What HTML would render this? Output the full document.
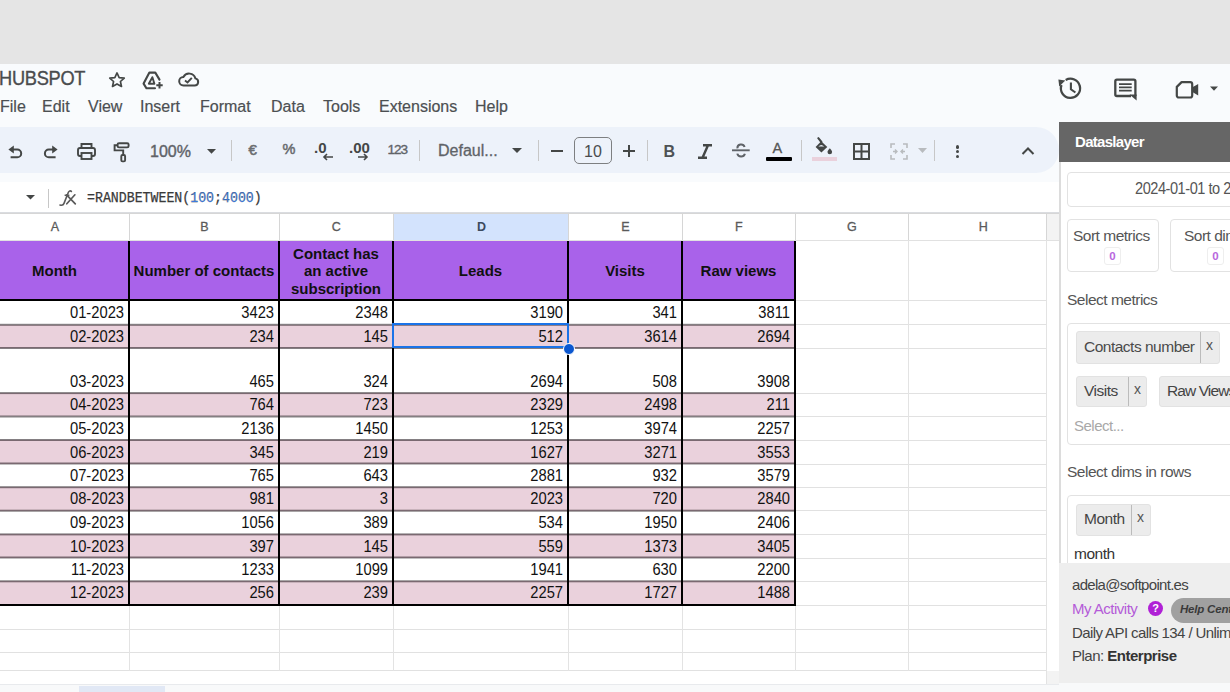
<!DOCTYPE html>
<html><head><meta charset="utf-8">
<style>
*{box-sizing:border-box;margin:0;padding:0}
html,body{width:1230px;height:692px;overflow:hidden;background:#f9fbfd;font-family:"Liberation Sans",sans-serif;position:relative}
.a{position:absolute;white-space:nowrap}
#topgray{left:0;top:0;width:1230px;height:64px;background:#e5e5e5}
.menu{top:97.7px;font-size:16px;color:#4c4f52;line-height:18px;-webkit-text-stroke:0.2px #4c4f52}
.icon{position:absolute}
#tb{left:-30px;top:127px;width:1089px;height:46px;background:#edf2fa;border-radius:23px}
.sep{position:absolute;width:1px;background:#c7c7c7}
#fbar{left:0;top:182px;width:1059px;height:31px;background:#fff;border-bottom:1px solid #dadce0}
#grid{left:0;top:213px;width:1059px;height:479px;background:#fff;overflow:hidden}
.ch{position:absolute;top:0;height:27px;font-size:12.5px;color:#444;text-align:center;line-height:27px;border-right:1px solid #e1e1e1;border-top:1px solid #e1e1e1;border-bottom:1px solid #e1e1e1}
.cell{position:absolute;font-size:15px;color:#000;text-align:right;padding-right:5px;line-height:17px}
.hd{position:absolute;font-size:15px;font-weight:bold;color:#111;text-align:center;display:flex;align-items:center;justify-content:center;line-height:17.5px}
#side{left:1059px;top:122px;width:171px;height:570px;background:#fff;border-left:2px solid #dcdcdc}
.sf{font-family:"Liberation Sans",sans-serif}
#wrap{position:absolute;left:0;top:0;width:1230px;height:692px;overflow:hidden}
</style></head><body><div id="wrap">
<div class="a" id="topgray"></div>
<!-- title -->
<div class="a" style="left:-1.2px;top:66.8px;font-size:19.5px;color:#4a4c4e;letter-spacing:-0.3px;-webkit-text-stroke:0.35px #4a4c4e;transform:scaleX(0.935);transform-origin:left center">HUBSPOT</div>
<!-- title icons -->
<svg class="icon" style="left:107px;top:70px" width="20" height="20" viewBox="0 0 24 24"><path d="M12 3.5l2.6 5.6 6.1.6-4.6 4.1 1.3 6-5.4-3.1-5.4 3.1 1.3-6-4.6-4.1 6.1-.6z" fill="none" stroke="#444746" stroke-width="2" stroke-linejoin="round"/></svg>
<svg class="icon" style="left:135px;top:64.8px" width="30" height="30" viewBox="0 0 30 30"><path d="M20 23.3H11.4L8.6 18.6 14.4 7.6h5.9l4.2 7" fill="none" stroke="#444746" stroke-width="2.1" stroke-linejoin="round" stroke-linecap="round"/><path d="M17.4 12.2l-3.6 6.5h5.6z" fill="none" stroke="#444746" stroke-width="1.9" stroke-linejoin="round"/><path d="M24.5 17v6.4M21.3 20.2h6.4" stroke="#444746" stroke-width="2"/></svg>
<svg class="icon" style="left:175px;top:64px" width="28" height="28" viewBox="0 0 28 28"><path d="M8.5 21.5H19.6A3.6 3.6 0 0 0 20.4 14.4A6.5 6.5 0 0 0 8.4 13A4.25 4.25 0 0 0 8.5 21.5Z" fill="none" stroke="#444746" stroke-width="2"/><path d="M10 16.6l2.5 1.9 4.3-4.7" fill="none" stroke="#444746" stroke-width="1.9"/></svg>
<!-- menu -->
<div class="a menu" style="left:0px">File</div>
<div class="a menu" style="left:42px">Edit</div>
<div class="a menu" style="left:88px">View</div>
<div class="a menu" style="left:140px">Insert</div>
<div class="a menu" style="left:200px">Format</div>
<div class="a menu" style="left:271px">Data</div>
<div class="a menu" style="left:323px">Tools</div>
<div class="a menu" style="left:379px">Extensions</div>
<div class="a menu" style="left:475px">Help</div>
<!-- right icons -->
<svg class="icon" style="left:1056px;top:74px" width="30" height="30" viewBox="0 0 30 30"><path d="M9.7 6A9.6 9.6 0 1 1 5.48 11" fill="none" stroke="#444746" stroke-width="2.3"/><path d="M2.4 5.6L9.3 6.6L3.2 12.4z" fill="#444746"/><path d="M14.9 8.6V15.3L19.4 18.5" fill="none" stroke="#444746" stroke-width="2.1"/></svg>
<svg class="icon" style="left:1113px;top:78px" width="26" height="24" viewBox="0 0 26 24"><path d="M22.4 18V3.3a1.6 1.6 0 0 0-1.6-1.6H3.9A1.6 1.6 0 0 0 2.3 3.3v13.1a1.6 1.6 0 0 0 1.6 1.6H18" fill="none" stroke="#444746" stroke-width="2.3" stroke-linejoin="round"/><path d="M16.5 16.6h7.1v5.8z" fill="#444746"/><path d="M6 6.2h12.7M6 9.4h12.7M6 12.6h12.7" stroke="#444746" stroke-width="1.7"/></svg>
<svg class="icon" style="left:1174px;top:79px" width="26" height="21" viewBox="0 0 26 21"><path d="M7.6 3.1H16.2a2 2 0 0 1 2 2V16.5a2 2 0 0 1-2 2H4.8a2 2 0 0 1-2-2V7.9Z" fill="none" stroke="#444746" stroke-width="2.2" stroke-linejoin="round"/><path d="M18 8.6L24.2 5V16.4L18 12.8Z" fill="#444746"/></svg>
<svg class="icon" style="left:1209px;top:85.8px" width="10" height="6" viewBox="0 0 10 6"><path d="M1 0.6h8L5 4.8z" fill="#444746"/></svg>

<!-- toolbar -->
<div class="a" id="tb"></div>
<div id="tbitems">
<svg class="icon" style="left:6px;top:142px" width="20" height="20" viewBox="0 0 20 20"><path d="M6.5 7.5H11.3A3.9 3.9 0 0 1 11.3 15.3H4.6" fill="none" stroke="#444746" stroke-width="2"/><path d="M2.4 7.5L7.8 3.6V11.4z" fill="#444746"/></svg>
<svg class="icon" style="left:41px;top:142px" width="20" height="20" viewBox="0 0 20 20"><path d="M12.5 7.5H7.8A3.9 3.9 0 0 0 7.8 15.3H14.6" fill="none" stroke="#444746" stroke-width="2"/><path d="M16.6 7.5L11.2 3.6V11.4z" fill="#444746"/></svg>
<svg class="icon" style="left:76px;top:141px" width="21" height="21" viewBox="0 0 21 21"><path d="M5.5 7V3h10v4" fill="none" stroke="#444746" stroke-width="1.9"/><rect x="2" y="7" width="17" height="8" rx="2" fill="none" stroke="#444746" stroke-width="1.9"/><rect x="5.5" y="12" width="10" height="6" fill="#edf2fa" stroke="#444746" stroke-width="1.9"/></svg>
<svg class="icon" style="left:112px;top:140px" width="19" height="23" viewBox="0 0 19 23"><rect x="5.6" y="3.2" width="11" height="4.2" rx="1.4" fill="none" stroke="#444746" stroke-width="1.9"/><path d="M5.6 5.3H2.6V10.4H11.2V15" fill="none" stroke="#444746" stroke-width="1.9"/><rect x="9.3" y="15" width="3.8" height="6.4" rx="1.2" fill="none" stroke="#444746" stroke-width="1.9"/></svg>
<div class="a" style="left:150px;top:143px;font-size:16px;color:#5f6368;-webkit-text-stroke:0.4px #5f6368">100%</div>
<svg class="icon" style="left:206.8px;top:148.8px" width="9" height="5" viewBox="0 0 9 5"><path d="M0 0h9L4.5 4.8z" fill="#444746"/></svg>
<div class="sep" style="left:231px;top:140px;height:21px"></div>
<div class="a" style="left:248.5px;top:141px;font-size:15px;color:#6a6d70;-webkit-text-stroke:0.6px #6a6d70">€</div>
<div class="a" style="left:282.5px;top:140.5px;font-size:14.5px;color:#6a6d70;-webkit-text-stroke:0.5px #6a6d70">%</div>
<div class="a" style="left:314px;top:139px;font-size:15px;color:#444746;font-weight:bold">.0</div>
<svg class="icon" style="left:322px;top:153px" width="12" height="8" viewBox="0 0 12 8"><path d="M11 4H2M5 1L2 4l3 3" fill="none" stroke="#444746" stroke-width="1.6"/></svg>
<div class="a" style="left:349px;top:139px;font-size:15px;color:#444746;font-weight:bold">.00</div>
<svg class="icon" style="left:357px;top:153px" width="12" height="8" viewBox="0 0 12 8"><path d="M1 4h9M7 1l3 3-3 3" fill="none" stroke="#444746" stroke-width="1.6"/></svg>
<div class="a" style="left:387.5px;top:141.8px;font-size:13.6px;color:#5f6368;letter-spacing:-1.1px;-webkit-text-stroke:0.35px #5f6368">123</div>
<div class="sep" style="left:419px;top:140px;height:21px"></div>
<div class="a" style="left:438px;top:142px;font-size:16px;color:#5f6368;-webkit-text-stroke:0.3px #5f6368">Defaul...</div>
<svg class="icon" style="left:512px;top:148px" width="10" height="6" viewBox="0 0 10 6"><path d="M0 0h10L5 5z" fill="#444746"/></svg>
<div class="sep" style="left:538px;top:140px;height:21px"></div>
<div class="a" style="left:551px;top:149.5px;width:12px;height:2px;background:#444746"></div>
<div class="a" style="left:574px;top:137px;width:38px;height:26.5px;border:1.6px solid #7d7f81;border-radius:5px;font-size:16px;color:#4a4c4e;text-align:center;line-height:27px">10</div>
<div class="a" style="left:623px;top:149.7px;width:11.5px;height:1.9px;background:#444746"></div>
<div class="a" style="left:627.8px;top:145px;width:1.9px;height:11.5px;background:#444746"></div>
<div class="sep" style="left:647px;top:140px;height:21px"></div>
<div class="a" style="left:663.5px;top:142.5px;font-size:16px;color:#4f5255;font-weight:bold">B</div>
<svg class="icon" style="left:697px;top:144px" width="16" height="15" viewBox="0 0 16 15"><path d="M6 1.2h9M1 13.8h9M11 1.2L5.5 13.8" fill="none" stroke="#444746" stroke-width="2.4"/></svg>
<svg class="icon" style="left:731px;top:141px" width="19" height="20" viewBox="0 0 19 20"><path d="M6.4 7.4A3.7 3.7 0 0 1 13.6 6" fill="none" stroke="#5f6368" stroke-width="2"/><path d="M1 9.3H18.7" stroke="#5f6368" stroke-width="1.9"/><path d="M6.3 12.6A3.9 3.7 0 0 0 13.9 12.8" fill="none" stroke="#5f6368" stroke-width="2"/></svg>
<div class="a" style="left:772.5px;top:139.5px;font-size:14.5px;color:#555;-webkit-text-stroke:0.3px #555">A</div>
<div class="a" style="left:765.5px;top:157px;width:26px;height:4px;background:#000;border-radius:1px"></div>
<div class="sep" style="left:801px;top:140px;height:21px"></div>
<svg class="icon" style="left:805px;top:133px" width="40" height="32" viewBox="0 0 40 32"><path d="M10.6 13.9L16.2 8.3L22.3 13.9L16.4 19.6Z" fill="#444746"/><path d="M13.4 13.6Q16.2 10.6 19.2 13.6Z" fill="#edf2fa"/><path d="M13.3 5.2L16.4 9" stroke="#444746" stroke-width="2.1" stroke-linecap="round"/><path d="M24.8 15.2C26.4 17 27.1 18 27.1 18.9A2.3 2.3 0 0 1 22.5 18.9C22.5 18 23.2 17 24.8 15.2Z" fill="#444746"/></svg>
<div class="a" style="left:812px;top:157px;width:25px;height:4px;background:#ead1dc"></div>
<svg class="icon" style="left:853px;top:143px" width="17" height="17" viewBox="0 0 17 17"><rect x="1" y="1" width="15" height="15" fill="none" stroke="#444746" stroke-width="2"/><path d="M8.5 1v15M1 8.5h15" stroke="#444746" stroke-width="2"/></svg>
<svg class="icon" style="left:890px;top:143px" width="18" height="17" viewBox="0 0 18 17"><path d="M1 5V1h4M13 1h4v4M17 12v4h-4M5 16H1v-4" fill="none" stroke="#b8bbbe" stroke-width="1.6"/><path d="M3 8.5h4M5 6.5l2 2-2 2M15 8.5h-4M13 6.5l-2 2 2 2" fill="none" stroke="#b8bbbe" stroke-width="1.4"/></svg>
<svg class="icon" style="left:918px;top:148px" width="9" height="6" viewBox="0 0 9 6"><path d="M0 0h9L4.5 5z" fill="#b8bbbe"/></svg>
<div class="sep" style="left:934px;top:140px;height:21px"></div>
<div class="a" style="left:955.5px;top:145px;width:3.5px;height:3.5px;border-radius:2px;background:#444746"></div>
<div class="a" style="left:955.5px;top:149.8px;width:3.5px;height:3.5px;border-radius:2px;background:#444746"></div>
<div class="a" style="left:955.5px;top:154.6px;width:3.5px;height:3.5px;border-radius:2px;background:#444746"></div>
<svg class="icon" style="left:1021px;top:146px" width="14" height="10" viewBox="0 0 14 10"><path d="M1.5 8l5.5-5.5 5.5 5.5" fill="none" stroke="#444746" stroke-width="2"/></svg>
</div>

<!-- formula bar -->
<div class="a" id="fbar"></div>
<svg class="icon" style="left:25.5px;top:194.8px" width="9" height="5" viewBox="0 0 9 5"><path d="M0 0h9L4.5 4.6z" fill="#444746"/></svg>
<div class="sep" style="left:47.5px;top:188.5px;height:19px;background:#c7c7c7"></div>
<svg class="icon" style="left:56px;top:188px" width="24" height="20" viewBox="0 0 24 20"><path d="M15.4 3.4C14.4 2.5 13 2.8 12.4 4.3L8 15.4C7.4 17 6 17.6 4 17" fill="none" stroke="#5a5a5a" stroke-width="1.6" stroke-linecap="round"/><path d="M8.6 7.3H13.4" stroke="#5a5a5a" stroke-width="1.5"/><path d="M10.6 6.8L19.3 15.8M18.9 6.8L10.8 15.8" stroke="#5a5a5a" stroke-width="1.7" stroke-linecap="round"/></svg>
<div class="a" style="left:87px;top:189.5px;font-size:15px;color:#3a3a3a;-webkit-text-stroke:0.25px #3a3a3a;font-family:'Liberation Mono',monospace;transform:scaleX(0.882);transform-origin:left center">=RANDBETWEEN(<span style="color:#3b7be0">100</span>;<span style="color:#3b7be0">4000</span>)</div>

<!-- grid -->
<div class="a" id="grid">
<div style="position:absolute;left:-20px;top:0px;width:149px;height:27px;background:#fff"></div>
<div style="position:absolute;left:-19.7px;top:1px;width:149px;height:27px;line-height:27px;text-align:center;font-size:12.5px;color:#5a5a5a;font-weight:normal;-webkit-text-stroke:0.3px #5a5a5a">A</div>
<div style="position:absolute;left:129px;top:0px;width:150px;height:27px;background:#fff"></div>
<div style="position:absolute;left:129.3px;top:1px;width:150px;height:27px;line-height:27px;text-align:center;font-size:12.5px;color:#5a5a5a;font-weight:normal;-webkit-text-stroke:0.3px #5a5a5a">B</div>
<div style="position:absolute;left:279px;top:0px;width:114px;height:27px;background:#fff"></div>
<div style="position:absolute;left:279.3px;top:1px;width:114px;height:27px;line-height:27px;text-align:center;font-size:12.5px;color:#5a5a5a;font-weight:normal;-webkit-text-stroke:0.3px #5a5a5a">C</div>
<div style="position:absolute;left:393px;top:0px;width:175px;height:27px;background:#d3e3fd"></div>
<div style="position:absolute;left:394px;top:1px;width:175px;height:27px;line-height:27px;text-align:center;font-size:12.5px;color:#3c4a5e;font-weight:bold;-webkit-text-stroke:0">D</div>
<div style="position:absolute;left:568px;top:0px;width:114px;height:27px;background:#fff"></div>
<div style="position:absolute;left:568.3px;top:1px;width:114px;height:27px;line-height:27px;text-align:center;font-size:12.5px;color:#5a5a5a;font-weight:normal;-webkit-text-stroke:0.3px #5a5a5a">E</div>
<div style="position:absolute;left:682px;top:0px;width:113px;height:27px;background:#fff"></div>
<div style="position:absolute;left:682.3px;top:1px;width:113px;height:27px;line-height:27px;text-align:center;font-size:12.5px;color:#5a5a5a;font-weight:normal;-webkit-text-stroke:0.3px #5a5a5a">F</div>
<div style="position:absolute;left:795px;top:0px;width:113px;height:27px;background:#fff"></div>
<div style="position:absolute;left:795.3px;top:1px;width:113px;height:27px;line-height:27px;text-align:center;font-size:12.5px;color:#5a5a5a;font-weight:normal;-webkit-text-stroke:0.3px #5a5a5a">G</div>
<div style="position:absolute;left:908px;top:0px;width:138px;height:27px;background:#fff"></div>
<div style="position:absolute;left:908.3px;top:1px;width:150px;height:27px;line-height:27px;text-align:center;font-size:12.5px;color:#5a5a5a;font-weight:normal;-webkit-text-stroke:0.3px #5a5a5a">H</div>
<div style="position:absolute;left:1046px;top:0px;width:13px;height:27px;background:#f3f3f3"></div>
<div style="position:absolute;left:0px;top:0px;width:1059px;height:1px;background:#e1e1e1"></div>
<div style="position:absolute;left:0px;top:27px;width:1059px;height:1px;background:#e1e1e1"></div>
<div style="position:absolute;left:0px;top:87px;width:1046px;height:1px;background:#e1e1e1"></div>
<div style="position:absolute;left:0px;top:111px;width:1046px;height:1px;background:#e1e1e1"></div>
<div style="position:absolute;left:0px;top:135px;width:1046px;height:1px;background:#e1e1e1"></div>
<div style="position:absolute;left:0px;top:180px;width:1046px;height:1px;background:#e1e1e1"></div>
<div style="position:absolute;left:0px;top:203px;width:1046px;height:1px;background:#e1e1e1"></div>
<div style="position:absolute;left:0px;top:227px;width:1046px;height:1px;background:#e1e1e1"></div>
<div style="position:absolute;left:0px;top:251px;width:1046px;height:1px;background:#e1e1e1"></div>
<div style="position:absolute;left:0px;top:274px;width:1046px;height:1px;background:#e1e1e1"></div>
<div style="position:absolute;left:0px;top:297px;width:1046px;height:1px;background:#e1e1e1"></div>
<div style="position:absolute;left:0px;top:321px;width:1046px;height:1px;background:#e1e1e1"></div>
<div style="position:absolute;left:0px;top:345px;width:1046px;height:1px;background:#e1e1e1"></div>
<div style="position:absolute;left:0px;top:368px;width:1046px;height:1px;background:#e1e1e1"></div>
<div style="position:absolute;left:0px;top:392px;width:1046px;height:1px;background:#e1e1e1"></div>
<div style="position:absolute;left:0px;top:416px;width:1046px;height:1px;background:#e1e1e1"></div>
<div style="position:absolute;left:0px;top:439px;width:1046px;height:1px;background:#e1e1e1"></div>
<div style="position:absolute;left:0px;top:457px;width:1046px;height:1px;background:#e1e1e1"></div>
<div style="position:absolute;left:129px;top:0px;width:1px;height:458px;background:#e3e3e3"></div>
<div style="position:absolute;left:279px;top:0px;width:1px;height:458px;background:#e3e3e3"></div>
<div style="position:absolute;left:393px;top:0px;width:1px;height:458px;background:#e3e3e3"></div>
<div style="position:absolute;left:568px;top:0px;width:1px;height:458px;background:#e3e3e3"></div>
<div style="position:absolute;left:682px;top:0px;width:1px;height:458px;background:#e3e3e3"></div>
<div style="position:absolute;left:795px;top:0px;width:1px;height:458px;background:#e3e3e3"></div>
<div style="position:absolute;left:908px;top:0px;width:1px;height:458px;background:#e3e3e3"></div>
<div style="position:absolute;left:1046px;top:0px;width:1px;height:471px;background:#e3e3e3"></div>
<div style="position:absolute;left:1047px;top:458px;width:12px;height:13px;background:#f3f3f3"></div>
<div style="position:absolute;left:129px;top:0px;width:1px;height:27px;background:#d6d6d6"></div>
<div style="position:absolute;left:279px;top:0px;width:1px;height:27px;background:#d6d6d6"></div>
<div style="position:absolute;left:393px;top:0px;width:1px;height:27px;background:#d6d6d6"></div>
<div style="position:absolute;left:568px;top:0px;width:1px;height:27px;background:#d6d6d6"></div>
<div style="position:absolute;left:682px;top:0px;width:1px;height:27px;background:#d6d6d6"></div>
<div style="position:absolute;left:795px;top:0px;width:1px;height:27px;background:#d6d6d6"></div>
<div style="position:absolute;left:908px;top:0px;width:1px;height:27px;background:#d6d6d6"></div>
<div style="position:absolute;left:1046px;top:0px;width:1px;height:27px;background:#d6d6d6"></div>
<div style="position:absolute;left:0px;top:0px;width:1059px;height:1px;background:#d6d6d6"></div>
<div style="position:absolute;left:-20px;top:28px;width:815px;height:59px;background:#a962ea"></div>
<div style="position:absolute;left:-20px;top:87px;width:815px;height:25px;background:#fff"></div>
<div style="position:absolute;left:-20px;top:112px;width:815px;height:23px;background:#ead1dc"></div>
<div style="position:absolute;left:-20px;top:135px;width:815px;height:45px;background:#fff"></div>
<div style="position:absolute;left:-20px;top:180px;width:815px;height:23px;background:#ead1dc"></div>
<div style="position:absolute;left:-20px;top:203px;width:815px;height:24px;background:#fff"></div>
<div style="position:absolute;left:-20px;top:227px;width:815px;height:24px;background:#ead1dc"></div>
<div style="position:absolute;left:-20px;top:251px;width:815px;height:23px;background:#fff"></div>
<div style="position:absolute;left:-20px;top:274px;width:815px;height:24px;background:#ead1dc"></div>
<div style="position:absolute;left:-20px;top:298px;width:815px;height:23px;background:#fff"></div>
<div style="position:absolute;left:-20px;top:321px;width:815px;height:24px;background:#ead1dc"></div>
<div style="position:absolute;left:-20px;top:345px;width:815px;height:23px;background:#fff"></div>
<div style="position:absolute;left:-20px;top:368px;width:815px;height:24px;background:#ead1dc"></div>
<div style="position:absolute;left:-20px;top:110px;width:815px;height:1px;background:rgba(20,10,15,0.104)"></div>
<div style="position:absolute;left:-20px;top:111px;width:815px;height:1px;background:rgba(20,10,15,0.520)"></div>
<div style="position:absolute;left:-20px;top:112px;width:815px;height:1px;background:rgba(20,10,15,0.416)"></div>
<div style="position:absolute;left:-20px;top:134px;width:815px;height:1px;background:rgba(20,10,15,0.520)"></div>
<div style="position:absolute;left:-20px;top:135px;width:815px;height:1px;background:rgba(20,10,15,0.520)"></div>
<div style="position:absolute;left:-20px;top:179px;width:815px;height:1px;background:rgba(20,10,15,0.468)"></div>
<div style="position:absolute;left:-20px;top:180px;width:815px;height:1px;background:rgba(20,10,15,0.520)"></div>
<div style="position:absolute;left:-20px;top:181px;width:815px;height:1px;background:rgba(20,10,15,0.052)"></div>
<div style="position:absolute;left:-20px;top:202px;width:815px;height:1px;background:rgba(20,10,15,0.260)"></div>
<div style="position:absolute;left:-20px;top:203px;width:815px;height:1px;background:rgba(20,10,15,0.520)"></div>
<div style="position:absolute;left:-20px;top:204px;width:815px;height:1px;background:rgba(20,10,15,0.260)"></div>
<div style="position:absolute;left:-20px;top:226px;width:815px;height:1px;background:rgba(20,10,15,0.520)"></div>
<div style="position:absolute;left:-20px;top:227px;width:815px;height:1px;background:rgba(20,10,15,0.520)"></div>
<div style="position:absolute;left:-20px;top:249px;width:815px;height:1px;background:rgba(20,10,15,0.260)"></div>
<div style="position:absolute;left:-20px;top:250px;width:815px;height:1px;background:rgba(20,10,15,0.520)"></div>
<div style="position:absolute;left:-20px;top:251px;width:815px;height:1px;background:rgba(20,10,15,0.260)"></div>
<div style="position:absolute;left:-20px;top:273px;width:815px;height:1px;background:rgba(20,10,15,0.416)"></div>
<div style="position:absolute;left:-20px;top:274px;width:815px;height:1px;background:rgba(20,10,15,0.520)"></div>
<div style="position:absolute;left:-20px;top:275px;width:815px;height:1px;background:rgba(20,10,15,0.104)"></div>
<div style="position:absolute;left:-20px;top:296px;width:815px;height:1px;background:rgba(20,10,15,0.156)"></div>
<div style="position:absolute;left:-20px;top:297px;width:815px;height:1px;background:rgba(20,10,15,0.520)"></div>
<div style="position:absolute;left:-20px;top:298px;width:815px;height:1px;background:rgba(20,10,15,0.364)"></div>
<div style="position:absolute;left:-20px;top:320px;width:815px;height:1px;background:rgba(20,10,15,0.312)"></div>
<div style="position:absolute;left:-20px;top:321px;width:815px;height:1px;background:rgba(20,10,15,0.520)"></div>
<div style="position:absolute;left:-20px;top:322px;width:815px;height:1px;background:rgba(20,10,15,0.208)"></div>
<div style="position:absolute;left:-20px;top:343px;width:815px;height:1px;background:rgba(20,10,15,0.260)"></div>
<div style="position:absolute;left:-20px;top:344px;width:815px;height:1px;background:rgba(20,10,15,0.520)"></div>
<div style="position:absolute;left:-20px;top:345px;width:815px;height:1px;background:rgba(20,10,15,0.260)"></div>
<div style="position:absolute;left:-20px;top:367px;width:815px;height:1px;background:rgba(20,10,15,0.364)"></div>
<div style="position:absolute;left:-20px;top:368px;width:815px;height:1px;background:rgba(20,10,15,0.520)"></div>
<div style="position:absolute;left:-20px;top:369px;width:815px;height:1px;background:rgba(20,10,15,0.156)"></div>
<div style="position:absolute;left:-20px;top:86px;width:816px;height:2px;background:#000"></div>
<div style="position:absolute;left:-20px;top:391px;width:816px;height:2px;background:#000"></div>
<div style="position:absolute;left:128px;top:28px;width:2px;height:365px;background:#000"></div>
<div style="position:absolute;left:278px;top:28px;width:2px;height:365px;background:#000"></div>
<div style="position:absolute;left:392px;top:28px;width:2px;height:365px;background:#000"></div>
<div style="position:absolute;left:567px;top:28px;width:2px;height:365px;background:#000"></div>
<div style="position:absolute;left:681px;top:28px;width:2px;height:365px;background:#000"></div>
<div style="position:absolute;left:794px;top:28px;width:2px;height:365px;background:#000"></div>
<div style="position:absolute;left:-19px;top:29px;width:147px;height:58px;display:flex;align-items:center;justify-content:center;text-align:center;font-weight:bold;font-size:15px;line-height:17.5px;color:#111">Month</div>
<div style="position:absolute;left:130px;top:29px;width:148px;height:58px;display:flex;align-items:center;justify-content:center;text-align:center;font-weight:bold;font-size:15px;line-height:17.5px;color:#111">Number of contacts</div>
<div style="position:absolute;left:280px;top:29px;width:112px;height:58px;display:flex;align-items:center;justify-content:center;text-align:center;font-weight:bold;font-size:15px;line-height:17.5px;color:#111">Contact has<br>an active<br>subscription</div>
<div style="position:absolute;left:394px;top:29px;width:173px;height:58px;display:flex;align-items:center;justify-content:center;text-align:center;font-weight:bold;font-size:15px;line-height:17.5px;color:#111">Leads</div>
<div style="position:absolute;left:569px;top:29px;width:112px;height:58px;display:flex;align-items:center;justify-content:center;text-align:center;font-weight:bold;font-size:15px;line-height:17.5px;color:#111">Visits</div>
<div style="position:absolute;left:683px;top:29px;width:111px;height:58px;display:flex;align-items:center;justify-content:center;text-align:center;font-weight:bold;font-size:15px;line-height:17.5px;color:#111">Raw views</div>
<div style="position:absolute;left:-20px;top:91.3px;width:144px;height:18px;line-height:18px;text-align:right;font-size:16px;color:#111;transform:scaleX(0.92);transform-origin:right center">01-2023</div>
<div style="position:absolute;left:129px;top:91.3px;width:145px;height:18px;line-height:18px;text-align:right;font-size:16px;color:#111;transform:scaleX(0.92);transform-origin:right center">3423</div>
<div style="position:absolute;left:279px;top:91.3px;width:109px;height:18px;line-height:18px;text-align:right;font-size:16px;color:#111;transform:scaleX(0.92);transform-origin:right center">2348</div>
<div style="position:absolute;left:393px;top:91.3px;width:170px;height:18px;line-height:18px;text-align:right;font-size:16px;color:#111;transform:scaleX(0.92);transform-origin:right center">3190</div>
<div style="position:absolute;left:568px;top:91.3px;width:109px;height:18px;line-height:18px;text-align:right;font-size:16px;color:#111;transform:scaleX(0.92);transform-origin:right center">341</div>
<div style="position:absolute;left:682px;top:91.3px;width:108px;height:18px;line-height:18px;text-align:right;font-size:16px;color:#111;transform:scaleX(0.92);transform-origin:right center">3811</div>
<div style="position:absolute;left:-20px;top:115.3px;width:144px;height:18px;line-height:18px;text-align:right;font-size:16px;color:#111;transform:scaleX(0.92);transform-origin:right center">02-2023</div>
<div style="position:absolute;left:129px;top:115.3px;width:145px;height:18px;line-height:18px;text-align:right;font-size:16px;color:#111;transform:scaleX(0.92);transform-origin:right center">234</div>
<div style="position:absolute;left:279px;top:115.3px;width:109px;height:18px;line-height:18px;text-align:right;font-size:16px;color:#111;transform:scaleX(0.92);transform-origin:right center">145</div>
<div style="position:absolute;left:393px;top:115.3px;width:170px;height:18px;line-height:18px;text-align:right;font-size:16px;color:#111;transform:scaleX(0.92);transform-origin:right center">512</div>
<div style="position:absolute;left:568px;top:115.3px;width:109px;height:18px;line-height:18px;text-align:right;font-size:16px;color:#111;transform:scaleX(0.92);transform-origin:right center">3614</div>
<div style="position:absolute;left:682px;top:115.3px;width:108px;height:18px;line-height:18px;text-align:right;font-size:16px;color:#111;transform:scaleX(0.92);transform-origin:right center">2694</div>
<div style="position:absolute;left:-20px;top:160.3px;width:144px;height:18px;line-height:18px;text-align:right;font-size:16px;color:#111;transform:scaleX(0.92);transform-origin:right center">03-2023</div>
<div style="position:absolute;left:129px;top:160.3px;width:145px;height:18px;line-height:18px;text-align:right;font-size:16px;color:#111;transform:scaleX(0.92);transform-origin:right center">465</div>
<div style="position:absolute;left:279px;top:160.3px;width:109px;height:18px;line-height:18px;text-align:right;font-size:16px;color:#111;transform:scaleX(0.92);transform-origin:right center">324</div>
<div style="position:absolute;left:393px;top:160.3px;width:170px;height:18px;line-height:18px;text-align:right;font-size:16px;color:#111;transform:scaleX(0.92);transform-origin:right center">2694</div>
<div style="position:absolute;left:568px;top:160.3px;width:109px;height:18px;line-height:18px;text-align:right;font-size:16px;color:#111;transform:scaleX(0.92);transform-origin:right center">508</div>
<div style="position:absolute;left:682px;top:160.3px;width:108px;height:18px;line-height:18px;text-align:right;font-size:16px;color:#111;transform:scaleX(0.92);transform-origin:right center">3908</div>
<div style="position:absolute;left:-20px;top:183.3px;width:144px;height:18px;line-height:18px;text-align:right;font-size:16px;color:#111;transform:scaleX(0.92);transform-origin:right center">04-2023</div>
<div style="position:absolute;left:129px;top:183.3px;width:145px;height:18px;line-height:18px;text-align:right;font-size:16px;color:#111;transform:scaleX(0.92);transform-origin:right center">764</div>
<div style="position:absolute;left:279px;top:183.3px;width:109px;height:18px;line-height:18px;text-align:right;font-size:16px;color:#111;transform:scaleX(0.92);transform-origin:right center">723</div>
<div style="position:absolute;left:393px;top:183.3px;width:170px;height:18px;line-height:18px;text-align:right;font-size:16px;color:#111;transform:scaleX(0.92);transform-origin:right center">2329</div>
<div style="position:absolute;left:568px;top:183.3px;width:109px;height:18px;line-height:18px;text-align:right;font-size:16px;color:#111;transform:scaleX(0.92);transform-origin:right center">2498</div>
<div style="position:absolute;left:682px;top:183.3px;width:108px;height:18px;line-height:18px;text-align:right;font-size:16px;color:#111;transform:scaleX(0.92);transform-origin:right center">211</div>
<div style="position:absolute;left:-20px;top:207.3px;width:144px;height:18px;line-height:18px;text-align:right;font-size:16px;color:#111;transform:scaleX(0.92);transform-origin:right center">05-2023</div>
<div style="position:absolute;left:129px;top:207.3px;width:145px;height:18px;line-height:18px;text-align:right;font-size:16px;color:#111;transform:scaleX(0.92);transform-origin:right center">2136</div>
<div style="position:absolute;left:279px;top:207.3px;width:109px;height:18px;line-height:18px;text-align:right;font-size:16px;color:#111;transform:scaleX(0.92);transform-origin:right center">1450</div>
<div style="position:absolute;left:393px;top:207.3px;width:170px;height:18px;line-height:18px;text-align:right;font-size:16px;color:#111;transform:scaleX(0.92);transform-origin:right center">1253</div>
<div style="position:absolute;left:568px;top:207.3px;width:109px;height:18px;line-height:18px;text-align:right;font-size:16px;color:#111;transform:scaleX(0.92);transform-origin:right center">3974</div>
<div style="position:absolute;left:682px;top:207.3px;width:108px;height:18px;line-height:18px;text-align:right;font-size:16px;color:#111;transform:scaleX(0.92);transform-origin:right center">2257</div>
<div style="position:absolute;left:-20px;top:231.3px;width:144px;height:18px;line-height:18px;text-align:right;font-size:16px;color:#111;transform:scaleX(0.92);transform-origin:right center">06-2023</div>
<div style="position:absolute;left:129px;top:231.3px;width:145px;height:18px;line-height:18px;text-align:right;font-size:16px;color:#111;transform:scaleX(0.92);transform-origin:right center">345</div>
<div style="position:absolute;left:279px;top:231.3px;width:109px;height:18px;line-height:18px;text-align:right;font-size:16px;color:#111;transform:scaleX(0.92);transform-origin:right center">219</div>
<div style="position:absolute;left:393px;top:231.3px;width:170px;height:18px;line-height:18px;text-align:right;font-size:16px;color:#111;transform:scaleX(0.92);transform-origin:right center">1627</div>
<div style="position:absolute;left:568px;top:231.3px;width:109px;height:18px;line-height:18px;text-align:right;font-size:16px;color:#111;transform:scaleX(0.92);transform-origin:right center">3271</div>
<div style="position:absolute;left:682px;top:231.3px;width:108px;height:18px;line-height:18px;text-align:right;font-size:16px;color:#111;transform:scaleX(0.92);transform-origin:right center">3553</div>
<div style="position:absolute;left:-20px;top:254.3px;width:144px;height:18px;line-height:18px;text-align:right;font-size:16px;color:#111;transform:scaleX(0.92);transform-origin:right center">07-2023</div>
<div style="position:absolute;left:129px;top:254.3px;width:145px;height:18px;line-height:18px;text-align:right;font-size:16px;color:#111;transform:scaleX(0.92);transform-origin:right center">765</div>
<div style="position:absolute;left:279px;top:254.3px;width:109px;height:18px;line-height:18px;text-align:right;font-size:16px;color:#111;transform:scaleX(0.92);transform-origin:right center">643</div>
<div style="position:absolute;left:393px;top:254.3px;width:170px;height:18px;line-height:18px;text-align:right;font-size:16px;color:#111;transform:scaleX(0.92);transform-origin:right center">2881</div>
<div style="position:absolute;left:568px;top:254.3px;width:109px;height:18px;line-height:18px;text-align:right;font-size:16px;color:#111;transform:scaleX(0.92);transform-origin:right center">932</div>
<div style="position:absolute;left:682px;top:254.3px;width:108px;height:18px;line-height:18px;text-align:right;font-size:16px;color:#111;transform:scaleX(0.92);transform-origin:right center">3579</div>
<div style="position:absolute;left:-20px;top:277.3px;width:144px;height:18px;line-height:18px;text-align:right;font-size:16px;color:#111;transform:scaleX(0.92);transform-origin:right center">08-2023</div>
<div style="position:absolute;left:129px;top:277.3px;width:145px;height:18px;line-height:18px;text-align:right;font-size:16px;color:#111;transform:scaleX(0.92);transform-origin:right center">981</div>
<div style="position:absolute;left:279px;top:277.3px;width:109px;height:18px;line-height:18px;text-align:right;font-size:16px;color:#111;transform:scaleX(0.92);transform-origin:right center">3</div>
<div style="position:absolute;left:393px;top:277.3px;width:170px;height:18px;line-height:18px;text-align:right;font-size:16px;color:#111;transform:scaleX(0.92);transform-origin:right center">2023</div>
<div style="position:absolute;left:568px;top:277.3px;width:109px;height:18px;line-height:18px;text-align:right;font-size:16px;color:#111;transform:scaleX(0.92);transform-origin:right center">720</div>
<div style="position:absolute;left:682px;top:277.3px;width:108px;height:18px;line-height:18px;text-align:right;font-size:16px;color:#111;transform:scaleX(0.92);transform-origin:right center">2840</div>
<div style="position:absolute;left:-20px;top:301.3px;width:144px;height:18px;line-height:18px;text-align:right;font-size:16px;color:#111;transform:scaleX(0.92);transform-origin:right center">09-2023</div>
<div style="position:absolute;left:129px;top:301.3px;width:145px;height:18px;line-height:18px;text-align:right;font-size:16px;color:#111;transform:scaleX(0.92);transform-origin:right center">1056</div>
<div style="position:absolute;left:279px;top:301.3px;width:109px;height:18px;line-height:18px;text-align:right;font-size:16px;color:#111;transform:scaleX(0.92);transform-origin:right center">389</div>
<div style="position:absolute;left:393px;top:301.3px;width:170px;height:18px;line-height:18px;text-align:right;font-size:16px;color:#111;transform:scaleX(0.92);transform-origin:right center">534</div>
<div style="position:absolute;left:568px;top:301.3px;width:109px;height:18px;line-height:18px;text-align:right;font-size:16px;color:#111;transform:scaleX(0.92);transform-origin:right center">1950</div>
<div style="position:absolute;left:682px;top:301.3px;width:108px;height:18px;line-height:18px;text-align:right;font-size:16px;color:#111;transform:scaleX(0.92);transform-origin:right center">2406</div>
<div style="position:absolute;left:-20px;top:325.3px;width:144px;height:18px;line-height:18px;text-align:right;font-size:16px;color:#111;transform:scaleX(0.92);transform-origin:right center">10-2023</div>
<div style="position:absolute;left:129px;top:325.3px;width:145px;height:18px;line-height:18px;text-align:right;font-size:16px;color:#111;transform:scaleX(0.92);transform-origin:right center">397</div>
<div style="position:absolute;left:279px;top:325.3px;width:109px;height:18px;line-height:18px;text-align:right;font-size:16px;color:#111;transform:scaleX(0.92);transform-origin:right center">145</div>
<div style="position:absolute;left:393px;top:325.3px;width:170px;height:18px;line-height:18px;text-align:right;font-size:16px;color:#111;transform:scaleX(0.92);transform-origin:right center">559</div>
<div style="position:absolute;left:568px;top:325.3px;width:109px;height:18px;line-height:18px;text-align:right;font-size:16px;color:#111;transform:scaleX(0.92);transform-origin:right center">1373</div>
<div style="position:absolute;left:682px;top:325.3px;width:108px;height:18px;line-height:18px;text-align:right;font-size:16px;color:#111;transform:scaleX(0.92);transform-origin:right center">3405</div>
<div style="position:absolute;left:-20px;top:348.3px;width:144px;height:18px;line-height:18px;text-align:right;font-size:16px;color:#111;transform:scaleX(0.92);transform-origin:right center">11-2023</div>
<div style="position:absolute;left:129px;top:348.3px;width:145px;height:18px;line-height:18px;text-align:right;font-size:16px;color:#111;transform:scaleX(0.92);transform-origin:right center">1233</div>
<div style="position:absolute;left:279px;top:348.3px;width:109px;height:18px;line-height:18px;text-align:right;font-size:16px;color:#111;transform:scaleX(0.92);transform-origin:right center">1099</div>
<div style="position:absolute;left:393px;top:348.3px;width:170px;height:18px;line-height:18px;text-align:right;font-size:16px;color:#111;transform:scaleX(0.92);transform-origin:right center">1941</div>
<div style="position:absolute;left:568px;top:348.3px;width:109px;height:18px;line-height:18px;text-align:right;font-size:16px;color:#111;transform:scaleX(0.92);transform-origin:right center">630</div>
<div style="position:absolute;left:682px;top:348.3px;width:108px;height:18px;line-height:18px;text-align:right;font-size:16px;color:#111;transform:scaleX(0.92);transform-origin:right center">2200</div>
<div style="position:absolute;left:-20px;top:371.1px;width:144px;height:18px;line-height:18px;text-align:right;font-size:16px;color:#111;transform:scaleX(0.92);transform-origin:right center">12-2023</div>
<div style="position:absolute;left:129px;top:371.1px;width:145px;height:18px;line-height:18px;text-align:right;font-size:16px;color:#111;transform:scaleX(0.92);transform-origin:right center">256</div>
<div style="position:absolute;left:279px;top:371.1px;width:109px;height:18px;line-height:18px;text-align:right;font-size:16px;color:#111;transform:scaleX(0.92);transform-origin:right center">239</div>
<div style="position:absolute;left:393px;top:371.1px;width:170px;height:18px;line-height:18px;text-align:right;font-size:16px;color:#111;transform:scaleX(0.92);transform-origin:right center">2257</div>
<div style="position:absolute;left:568px;top:371.1px;width:109px;height:18px;line-height:18px;text-align:right;font-size:16px;color:#111;transform:scaleX(0.92);transform-origin:right center">1727</div>
<div style="position:absolute;left:682px;top:371.1px;width:108px;height:18px;line-height:18px;text-align:right;font-size:16px;color:#111;transform:scaleX(0.92);transform-origin:right center">1488</div>
<div style="position:absolute;left:392px;top:110px;width:177px;height:25px;border:2px solid #1a73e8"></div>
<div style="position:absolute;left:563px;top:129.5px;width:12px;height:12px;border-radius:50%;background:#0b57d0;border:1px solid #fff"></div>
</div>

<!-- sidebar -->
<div class="a" id="side">
<div style="position:absolute;left:-2px;top:0;width:173px;height:40px;background:#666"></div>
<div style="position:absolute;left:14px;top:11px;font-size:15px;font-weight:bold;color:#fff;letter-spacing:-0.7px">Dataslayer</div>
<div style="position:absolute;left:6px;top:50px;width:200px;height:35px;border:1.5px solid #e2e2e2;border-radius:4px"></div>
<div style="position:absolute;left:73.5px;top:58px;font-size:16px;color:#555;letter-spacing:-0.5px;transform:scaleX(0.91);transform-origin:left center">2024-01-01 to 2024-12-31</div>
<div style="position:absolute;left:6px;top:97px;width:92px;height:53px;border:1.5px solid #e2e2e2;border-radius:4px"></div>
<div style="position:absolute;left:12px;top:105px;font-size:15.5px;color:#555;letter-spacing:-0.5px">Sort metrics</div>
<div style="position:absolute;left:43px;top:125px;width:17px;height:18px;border:1px solid #eee;border-radius:3px;font-size:11.5px;font-weight:bold;line-height:16px;text-align:center;color:#b866de">0</div>
<div style="position:absolute;left:109px;top:97px;width:92px;height:53px;border:1.5px solid #e2e2e2;border-radius:4px"></div>
<div style="position:absolute;left:123px;top:105px;font-size:15.5px;color:#555;letter-spacing:-0.5px">Sort dims</div>
<div style="position:absolute;left:146px;top:125px;width:17px;height:18px;border:1px solid #eee;border-radius:3px;font-size:11.5px;font-weight:bold;line-height:16px;text-align:center;color:#b866de">0</div>
<div style="position:absolute;left:6px;top:169px;font-size:15.5px;color:#555;letter-spacing:-0.5px">Select metrics</div>
<div style="position:absolute;left:6px;top:201px;width:200px;height:122px;border:1.5px solid #e2e2e2;border-radius:4px"></div>
<div style="position:absolute;left:15px;top:209px;width:144px;height:33px;background:#ececec;border:1px solid #e2e2e2;border-radius:3px"></div>
<div style="position:absolute;left:139px;top:210px;width:1px;height:31px;background:#bbb"></div>
<div style="position:absolute;left:23px;top:216px;font-size:15.5px;color:#4a4a4a;letter-spacing:-0.5px">Contacts number</div>
<div style="position:absolute;left:145px;top:215px;font-size:14px;color:#555">x</div>
<div style="position:absolute;left:15px;top:254px;width:71px;height:31px;background:#ececec;border:1px solid #e2e2e2;border-radius:3px"></div>
<div style="position:absolute;left:67px;top:255px;width:1px;height:29px;background:#bbb"></div>
<div style="position:absolute;left:23px;top:260px;font-size:15.5px;color:#444;letter-spacing:-0.5px">Visits</div>
<div style="position:absolute;left:73px;top:259px;font-size:14px;color:#555">x</div>
<div style="position:absolute;left:98px;top:254px;width:110px;height:31px;background:#ececec;border:1px solid #e2e2e2;border-radius:3px"></div>
<div style="position:absolute;left:106px;top:260px;font-size:15.5px;color:#444;letter-spacing:-0.9px">Raw Views</div>
<div style="position:absolute;left:13px;top:295px;font-size:15px;color:#a8a8a8;letter-spacing:-0.5px">Select...</div>
<div style="position:absolute;left:6px;top:341px;font-size:15.5px;color:#555;letter-spacing:-0.5px">Select dims in rows</div>
<div style="position:absolute;left:6px;top:373px;width:200px;height:120px;border:1.5px solid #e2e2e2;border-radius:4px"></div>
<div style="position:absolute;left:15px;top:382px;width:75px;height:32px;background:#ececec;border:1px solid #e2e2e2;border-radius:3px"></div>
<div style="position:absolute;left:70px;top:383px;width:1px;height:30px;background:#bbb"></div>
<div style="position:absolute;left:23px;top:388px;font-size:15.5px;color:#444;letter-spacing:-0.5px">Month</div>
<div style="position:absolute;left:76px;top:387px;font-size:14px;color:#555">x</div>
<div style="position:absolute;left:13px;top:423px;font-size:15.5px;color:#333;letter-spacing:-0.5px">month</div>
<div style="position:absolute;left:-2px;top:441px;width:173px;height:120px;background:#eeeeee"></div>
<div style="position:absolute;left:11px;top:454px;font-size:15px;color:#444;letter-spacing:-0.7px">adela@softpoint.es</div>
<div style="position:absolute;left:11px;top:478px;font-size:15px;color:#b45bd8;letter-spacing:-0.5px">My Activity</div>
<div style="position:absolute;left:87px;top:479.3px;width:15px;height:15px;border-radius:50%;background:#b021d6;color:#fff;font-size:11px;font-weight:bold;text-align:center;line-height:15px">?</div>
<div style="position:absolute;left:110px;top:475.5px;width:100px;height:25.5px;border-radius:12.5px;background:#a0a0a0"></div>
<div style="position:absolute;left:119px;top:481px;font-size:11.5px;font-weight:bold;font-style:italic;color:#3a3a3a;letter-spacing:-0.2px">Help Center</div>
<div style="position:absolute;left:11px;top:502px;font-size:15px;color:#444;letter-spacing:-0.6px">Daily API calls 134 / Unlimited</div>
<div style="position:absolute;left:11px;top:525px;font-size:15px;color:#444;letter-spacing:-0.5px">Plan: <b style="color:#333">Enterprise</b></div>

</div>
<div class="a" style="left:0;top:684px;width:1059px;height:1px;background:#e8eaed"></div><div class="a" style="left:0;top:685px;width:1059px;height:7px;background:#f8f9fa"></div><div class="a" style="left:79px;top:686px;width:86px;height:6px;background:#e1e8f5"></div><div class="a" style="left:1059px;top:683px;width:171px;height:9px;background:#f8f9fa"></div>
</div></body></html>
